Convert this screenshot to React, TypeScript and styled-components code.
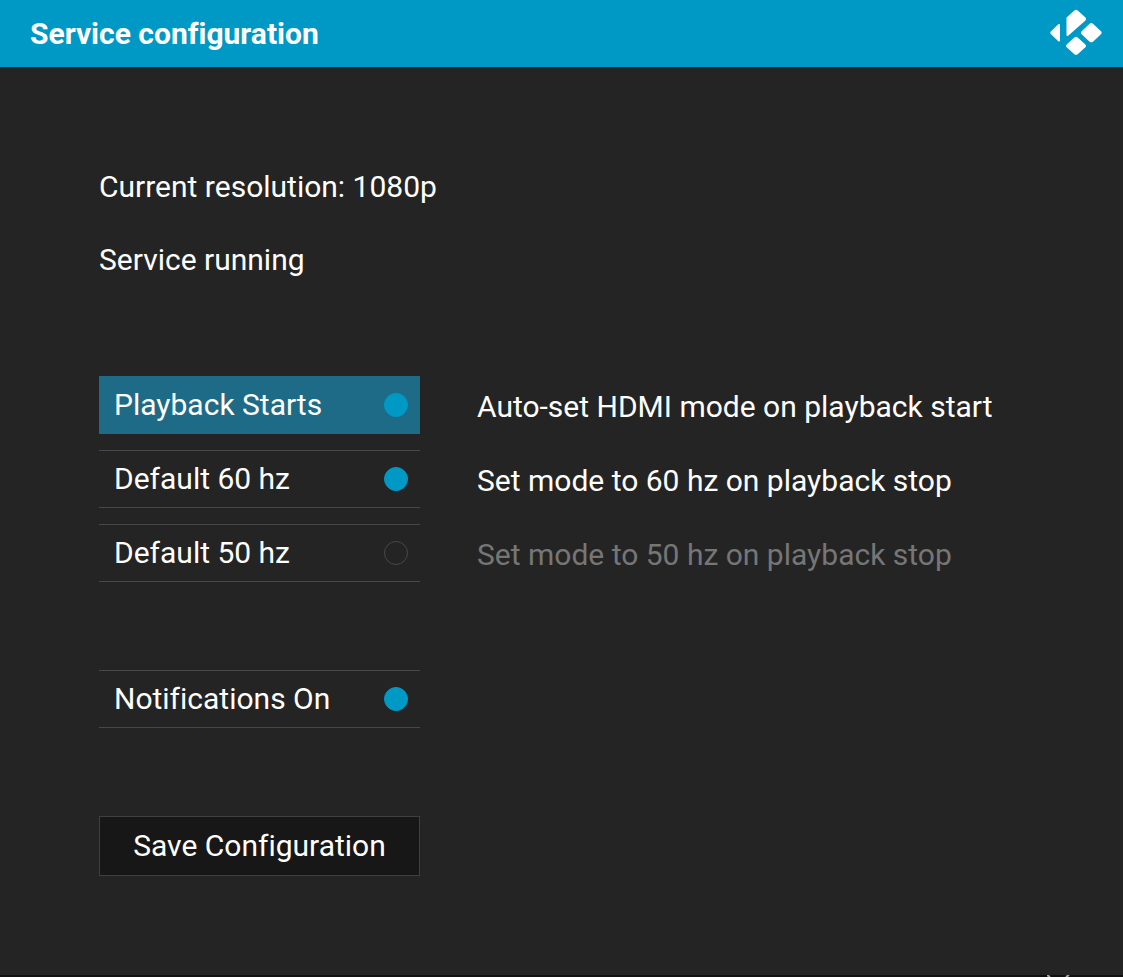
import React, { useState } from "react";
import styled, { createGlobalStyle } from "styled-components";

const GlobalStyle = createGlobalStyle`
  *, *::before, *::after { box-sizing: border-box; }
  body {
    margin: 0;
    background: #242424;
    color: #fff;
    font-family: Roboto, "Liberation Sans", sans-serif;
    font-size: 30px;
    line-height: 36px;
    font-variant-ligatures: none;
  }
`;

const Page = styled.div`
  min-height: 100vh;
  display: flex;
  flex-direction: column;
`;

const Header = styled.header`
  display: flex;
  align-items: center;
  justify-content: space-between;
  height: 67px;
  padding: 0 20px 0 30px;
  background: #0099c6;
`;

const Title = styled.h1`
  margin: 0;
  font-size: 30px;
  font-weight: 700;
`;

const Logo = styled.svg`
  display: block;
  width: 54px;
  height: 49px;
  fill: #fff;
  stroke: #fff;
  stroke-width: 2;
  stroke-linejoin: round;
`;

const Content = styled.main`
  flex: 1;
  display: flex;
  flex-direction: column;
  align-items: stretch;
  padding: 102px 24px 24px 99px;
`;

const Status = styled.section`
  display: flex;
  flex-direction: column;
  gap: 37px;
  margin-bottom: 98px;
`;

const StatusLine = styled.p`
  margin: 0;
`;

const Settings = styled.form`
  display: flex;
  flex-direction: column;
  gap: 88px;
`;

const Group = styled.div`
  display: flex;
  flex-direction: column;
  gap: 16px;
`;

const Row = styled.div`
  display: grid;
  grid-template-columns: 321px 1fr;
  column-gap: 57px;
`;

const Option = styled.label<{ $active?: boolean }>`
  display: flex;
  align-items: center;
  justify-content: space-between;
  height: 58px;
  padding: 0 12px 0 15px;
  border: solid ${(p) => (p.$active ? "#1d6b87" : "#484848")};
  border-width: 1px 0;
  background: ${(p) => (p.$active ? "#1d6b87" : "transparent")};
  cursor: pointer;
`;

const Toggle = styled.input`
  appearance: none;
  width: 24px;
  height: 24px;
  margin: 0;
  border: 1px solid #484848;
  border-radius: 50%;
  cursor: pointer;

  &:checked {
    border-color: #0099c6;
    background: #0099c6;
  }
`;

const Description = styled.p<{ $muted?: boolean }>`
  margin: 0;
  padding-top: 13px;
  color: ${(p) => (p.$muted ? "#767676" : "#fff")};
`;

const SaveButton = styled.button`
  width: 321px;
  height: 60px;
  padding: 0;
  border: 1px solid #404040;
  background: #171717;
  color: #fff;
  font: inherit;
  font-variant-ligatures: none;
  cursor: pointer;
`;

const BottomEdge = styled.footer`
  display: flex;
  justify-content: flex-end;
  height: 2px;
  padding-right: 53px;
  background: #111;
`;

const Marks = styled.svg`
  display: block;
  width: 23px;
  height: 2px;
  stroke: #aaa;
  stroke-width: 2;
`;

interface Setting {
  id: string;
  label: string;
  description?: string;
  active?: boolean;
}

const modes: Setting[] = [
  { id: "start", label: "Playback Starts", description: "Auto-set HDMI mode on playback start", active: true },
  { id: "hz60", label: "Default 60 hz", description: "Set mode to 60 hz on playback stop" },
  { id: "hz50", label: "Default 50 hz", description: "Set mode to 50 hz on playback stop" },
];

const notices: Setting[] = [{ id: "notify", label: "Notifications On" }];

export default function App() {
  const [values, setValues] = useState<Record<string, boolean>>({
    start: true,
    hz60: true,
    hz50: false,
    notify: true,
  });

  const renderRow = ({ id, label, description, active }: Setting) => (
    <Row key={id}>
      <Option htmlFor={id} $active={active}>
        {label}
        <Toggle
          id={id}
          type="checkbox"
          checked={values[id]}
          onChange={(e) => setValues({ ...values, [id]: e.target.checked })}
        />
      </Option>
      {description && <Description $muted={!values[id]}>{description}</Description>}
    </Row>
  );

  return (
    <Page>
      <GlobalStyle />
      <Header>
        <Title>Service configuration</Title>
        <Logo viewBox="0 0 54 49" aria-hidden="true">
          <path d="M10 16 V31.500 L2.500 24.200 Q2 23.700 2.500 23.200 Z" />
          <path d="M18.500 9 L26 2.200 Q27 1.400 28 2.200 L35.800 9.300 Q36.400 10 35.800 10.700 L18.500 26 Z" />
          <path d="M33.300 23 L41.300 15.500 Q42.300 14.700 43.300 15.500 L51.300 23 Q52 23.700 51.300 24.400 L43.300 31.900 Q42.300 32.700 41.300 31.900 L33.300 24.400 Q32.600 23.700 33.300 23 Z" />
          <path d="M18.300 36.200 L26 29.300 Q27 28.400 28 29.300 L35.700 36.200 Q36.400 36.900 35.700 37.600 L28 44.400 Q27 45.200 26 44.400 L18.300 37.600 Q17.600 36.900 18.300 36.200 Z" />
        </Logo>
      </Header>
      <Content>
        <Status>
          <StatusLine>Current resolution: 1080p</StatusLine>
          <StatusLine>Service running</StatusLine>
        </Status>
        <Settings onSubmit={(e) => e.preventDefault()}>
          <Group>{modes.map(renderRow)}</Group>
          <Group>{notices.map(renderRow)}</Group>
          <SaveButton type="submit">Save Configuration</SaveButton>
        </Settings>
      </Content>
      <BottomEdge>
        <Marks viewBox="0 0 23 2" aria-hidden="true">
          <path d="M0 0 L3 2 M22 0 L19 2" />
        </Marks>
      </BottomEdge>
    </Page>
  );
}
